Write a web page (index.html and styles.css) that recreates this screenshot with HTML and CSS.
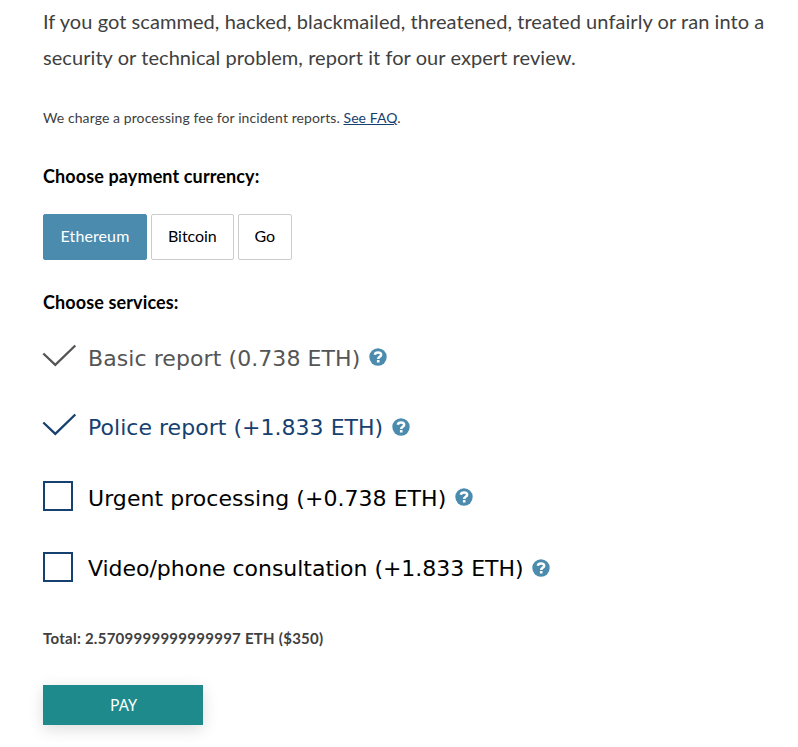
FILE: index.html
```html
<!DOCTYPE html>
<html lang="en">
<head>
    <meta charset="UTF-8">
    <meta name="viewport" content="width=device-width, initial-scale=1.0">
    <title>Report an incident</title>
    <link rel="stylesheet" href="styles.css">
</head>
<body>
    <main class="report">
        <p class="intro">If you got scammed, hacked, blackmailed, threatened, treated unfairly or ran into a security or technical problem, report it for our expert review.</p>
        <p class="fee">We charge a processing fee for incident reports. <a href="#">See FAQ</a>.</p>

        <h3>Choose payment currency:</h3>
        <div class="currencies">
            <button type="button" class="currency active">Ethereum</button>
            <button type="button" class="currency">Bitcoin</button>
            <button type="button" class="currency">Go</button>
        </div>

        <h3>Choose services:</h3>
        <ul class="services">
            <li class="service basic">
                <svg class="check" viewBox="0 0 34 24"><path d="M0.300 8.500L12.300 19.900L32.300 0.500"/></svg>
                <span class="label">Basic report (0.738 ETH)</span>
                <svg class="help" viewBox="0 0 18 18"><circle cx="9" cy="9" r="8.700"/><path d="M5.800 6.800C6.300 3.600 12.300 3.700 12.100 6.900C12 8.900 9.200 8.700 9.200 11M9.200 12V14.600"/></svg>
            </li>
            <li class="service police">
                <svg class="check" viewBox="0 0 34 24"><path d="M0.300 8.500L12.300 19.900L32.300 0.500"/></svg>
                <span class="label">Police report (+1.833 ETH)</span>
                <svg class="help" viewBox="0 0 18 18"><circle cx="9" cy="9" r="8.700"/><path d="M5.800 6.800C6.300 3.600 12.300 3.700 12.100 6.900C12 8.900 9.200 8.700 9.200 11M9.200 12V14.600"/></svg>
            </li>
            <li class="service urgent">
                <span class="box"></span>
                <span class="label">Urgent processing (+0.738 ETH)</span>
                <svg class="help" viewBox="0 0 18 18"><circle cx="9" cy="9" r="8.700"/><path d="M5.800 6.800C6.300 3.600 12.300 3.700 12.100 6.900C12 8.900 9.200 8.700 9.200 11M9.200 12V14.600"/></svg>
            </li>
            <li class="service video">
                <span class="box"></span>
                <span class="label">Video/phone consultation (+1.833 ETH)</span>
                <svg class="help" viewBox="0 0 18 18"><circle cx="9" cy="9" r="8.700"/><path d="M5.800 6.800C6.300 3.600 12.300 3.700 12.100 6.900C12 8.900 9.200 8.700 9.200 11M9.200 12V14.600"/></svg>
            </li>
        </ul>

        <p class="total">Total: 2.5709999999999997 ETH ($350)</p>
        <button type="button" class="pay">PAY</button>
    </main>
</body>
</html>
```
FILE: styles.css
```css
* {
    margin: 0;
    padding: 0;
    box-sizing: border-box;
}

body {
    font-family: Lato, sans-serif;
    background-color: #fff;
    color: #404040;
}

.report {
    min-height: 100vh;
    padding: 3px 20px 0 43px;
}

.intro {
    font-size: 20px;
    line-height: 36px;
    letter-spacing: 0.065px;
}

.fee {
    margin-top: 33px;
    font-size: 14px;
    line-height: 20px;
    letter-spacing: 0.085px;
}

.fee a {
    color: #15406f;
}

h3 {
    color: #000;
    font-size: 18px;
    line-height: 24px;
    letter-spacing: 0.12px;
}

.fee + h3 {
    margin-top: 36px;
}

.currencies {
    display: flex;
    gap: 4px;
    margin: 26px 0 30px;
}

.currency {
    height: 46px;
    padding: 0 16px 3px;
    border: 1px solid #ccc;
    border-radius: 2px;
    background-color: #fff;
    color: #000;
    font-family: Lato, sans-serif;
    font-size: 16px;
    letter-spacing: -0.07px;
}

.currency.active {
    width: 104px;
    background-color: #4b8bae;
    border-color: #4b8bae;
    color: #fff;
    letter-spacing: 0.1px;
}

.services {
    margin-top: 9px;
    list-style: none;
}

.service {
    display: flex;
    align-items: center;
    height: 70px;
    color: #000;
    font-family: "DejaVu Sans", sans-serif;
    font-size: 22px;
}

.basic {
    height: 69px;
    color: #555;
    letter-spacing: 0.08px;
}

.police {
    color: #15406f;
    letter-spacing: 0.03px;
}

.urgent {
    height: 71px;
    letter-spacing: 0.05px;
}

.video {
    letter-spacing: -0.03px;
}

.basic .label,
.urgent .label {
    padding-top: 2px;
}

.check {
    width: 34px;
    height: 24px;
    margin: 0 11px 1px 0;
    overflow: visible;
    fill: none;
    stroke: currentColor;
    stroke-width: 2.3;
}

.police .check {
    margin-bottom: 3px;
}

.box {
    width: 30px;
    height: 30px;
    margin: 0 15px 3px 0;
    border: 2px solid #15406f;
}

.help {
    width: 18px;
    height: 18px;
    margin: 0 0 1px 8.5px;
    fill: #4b8bae;
}

.help path {
    fill: none;
    stroke: #fff;
    stroke-width: 2.6;
}

.total {
    margin-top: 23px;
    font-size: 15px;
    font-weight: bold;
    line-height: 24px;
    letter-spacing: 0.26px;
}

.pay {
    display: block;
    width: 160px;
    height: 40px;
    margin-top: 35px;
    padding-left: 1px;
    border: none;
    background-color: #1f8a8c;
    box-shadow: 0 4px 16px rgba(0, 0, 0, 0.14);
    color: #fff;
    font-family: "Noto Sans", sans-serif;
    font-size: 16px;
}
```
